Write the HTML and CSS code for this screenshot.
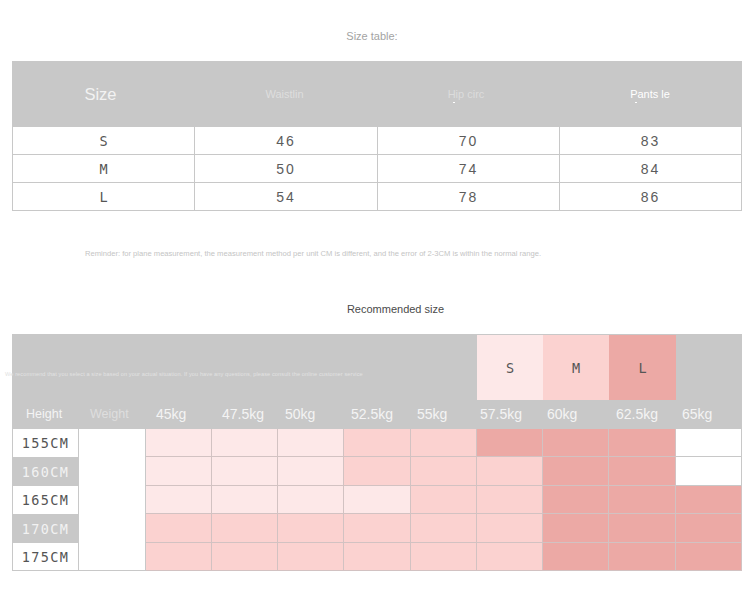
FILE: index.html
```html
<!DOCTYPE html>
<html lang="en">
<head>
<meta charset="utf-8">
<title>Size table</title>
<link rel="stylesheet" href="styles.css">
</head>
<body>
<main class="page">
  <h2 class="title title-size">Size table:</h2>
  <section class="size-table">
    <div class="size-head">
      <span class="hd hd-size">Size</span>
      <span class="hd hd-faint">Waistlin</span>
      <span class="hd hd-hip">Hip circ</span>
      <span class="hd hd-pants">Pants le</span>
    </div>
    <div class="cell mono">S</div><div class="cell num">46</div><div class="cell num">70</div><div class="cell num">83</div>
    <div class="cell mono">M</div><div class="cell num">50</div><div class="cell num">74</div><div class="cell num">84</div>
    <div class="cell mono">L</div><div class="cell num">54</div><div class="cell num">78</div><div class="cell num">86</div>
  </section>
  <p class="reminder">Reminder: for plane measurement, the measurement method per unit CM is different, and the error of 2-3CM is within the normal range.</p>
  <h2 class="title title-rec">Recommended size</h2>
  <section class="rec">
    <div class="rec-top">
      <div class="rec-note"><span>We recommend that you select a size based on your actual situation. If you have any questions, please consult the online customer service</span></div>
      <div class="key mono light">S</div>
      <div class="key mono mid">M</div>
      <div class="key mono dark">L</div>
    </div>
    <div class="rec-labels">
      <span class="lab-sm">Height</span><span class="lab-sm lab-faint">Weight</span>
      <span>45kg</span><span>47.5kg</span><span>50kg</span><span>52.5kg</span><span>55kg</span>
      <span>57.5kg</span><span>60kg</span><span>62.5kg</span><span>65kg</span>
    </div>
    <div class="rec-grid">
      <div class="h mono">155CM</div><div class="weight"></div>
      <div class="c light"></div><div class="c light"></div><div class="c light"></div><div class="c mid"></div><div class="c mid"></div><div class="c dark"></div><div class="c dark"></div><div class="c dark"></div><div class="c blank"></div>
      <div class="h mono grey">160CM</div>
      <div class="c light"></div><div class="c light"></div><div class="c light"></div><div class="c mid"></div><div class="c mid"></div><div class="c mid"></div><div class="c dark"></div><div class="c dark"></div><div class="c blank"></div>
      <div class="h mono">165CM</div>
      <div class="c light"></div><div class="c light"></div><div class="c light"></div><div class="c light"></div><div class="c mid"></div><div class="c mid"></div><div class="c dark"></div><div class="c dark"></div><div class="c dark"></div>
      <div class="h mono grey">170CM</div>
      <div class="c mid"></div><div class="c mid"></div><div class="c mid"></div><div class="c mid"></div><div class="c mid"></div><div class="c mid"></div><div class="c dark"></div><div class="c dark"></div><div class="c dark"></div>
      <div class="h h-last mono">175CM</div>
      <div class="c mid"></div><div class="c mid"></div><div class="c mid"></div><div class="c mid"></div><div class="c mid"></div><div class="c mid"></div><div class="c dark"></div><div class="c dark"></div><div class="c dark"></div>
    </div>
  </section>
</main>
</body>
</html>
```
FILE: styles.css
```css
* { box-sizing: border-box; }
html, body { margin: 0; background: #fff; }
body { font-family: "Liberation Sans", Arial, sans-serif; }

.page { width: 755px; height: 599px; padding: 29px 13px 0 12px; overflow: hidden; }

.title { margin: 0; font-weight: 400; font-size: 11px; line-height: 14px; text-align: center; }
.title-size { width: 720px; color: #a3a3a3; }
.title-rec { width: 767px; color: #4a4a4a; margin-top: 43px; }

.mono { font-family: "DejaVu Sans Mono", monospace; }

/* size table */
.size-table {
  margin-top: 18px;
  width: 730px;
  display: grid;
  grid-template-columns: 182px 183px 182px 182px;
  grid-template-rows: 66px 28px 28px 28px;
  border-left: 1px solid #c8c8c8;
  color: #555;
}
.size-head {
  grid-column: 1 / -1;
  height: 66px;
  margin-left: -1px;
  background: #c8c8c8;
  display: grid;
  grid-template-columns: 183px 183px 182px 182px;
  align-items: center;
  justify-items: center;
  color: #fff;
}
.hd { font-size: 11px; line-height: 14px; position: relative; white-space: nowrap; }
.hd-size { font-size: 16.5px; line-height: 20px; color: #f2f2f2; margin-right: 6px; }
.hd-faint { color: #dedede; margin-right: 4px; }
.hd-hip { color: #dcdcdc; margin-right: 6px; margin-top: -1px; }
.hd-pants { color: #fff; margin-right: 2px; margin-top: -1px; }
.hd-hip::after, .hd-pants::after {
  content: "";
  position: absolute;
  left: 5px;
  top: 15px;
  width: 2px;
  height: 1px;
  background: #fff;
}

.cell {
  display: flex;
  align-items: center;
  justify-content: center;
  border-right: 1px solid #c8c8c8;
  border-bottom: 1px solid #c8c8c8;
  font-size: 13.5px;
}
.num { font-size: 14px; letter-spacing: 2px; color: #5c5c5c; }

.reminder {
  margin: 38px 0 0;
  width: 730px;
  padding-left: 73px;
  font-size: 7.6px;
  line-height: 10px;
  color: #c4c4c4;
  white-space: nowrap;
}

/* recommended */
.rec { margin-top: 18px; width: 730px; }
.rec-top {
  height: 66px;
  background: #c8c8c8;
  padding: 1px 66px 0 465px;
  display: grid;
  grid-template-columns: 66px 66px 67px;
  position: relative;
}
.rec-note {
  position: absolute;
  left: -7px;
  top: 36px;
  font-size: 5.6px;
  line-height: 8px;
  letter-spacing: 0.1px;
  color: #e2e2e2;
  white-space: nowrap;
}
.key { display: flex; align-items: center; justify-content: center; font-size: 13.5px; color: #555; }
.rec-labels {
  height: 29px;
  background: #c8c8c8;
  padding: 0 0 2px 14px;
  display: grid;
  grid-template-columns: 64px 66px 66px 63px 66px 66px 63px 67px 69px 66px 50px;
  align-items: center;
  font-size: 14px;
  line-height: 18px;
  color: #f4f4f4;
}
.lab-sm { font-size: 12.5px; }
.lab-faint { color: #dedede; }

.rec-grid {
  display: grid;
  grid-template-columns: 66px 67px 66px 66px 66px 67px 66px 66px 66px 67px 66px;
  grid-template-rows: 28px 29px 28px 29px 28px;
  border-left: 1px solid #c8c8c8;
}
.h {
  display: flex;
  align-items: center;
  justify-content: center;
  font-size: 13.5px;
  letter-spacing: 1.4px;
  color: #555;
  border-right: 1px solid #c8c8c8;
}
.h-last { border-bottom: 1px solid #c8c8c8; }
.grey { background: #c8c8c8; color: #f2f2f2; }
.weight { grid-row: 1 / span 5; grid-column: 2; border-right: 1px solid #c8c8c8; border-bottom: 1px solid #c8c8c8; }
.c { border-right: 1px solid #d2c2c2; border-bottom: 1px solid #d2c2c2; }
.blank { border-color: #c8c8c8; }
.light { background: #fde8e8; }
.mid { background: #fbd2d0; }
.dark { background: #eca9a5; }
```
